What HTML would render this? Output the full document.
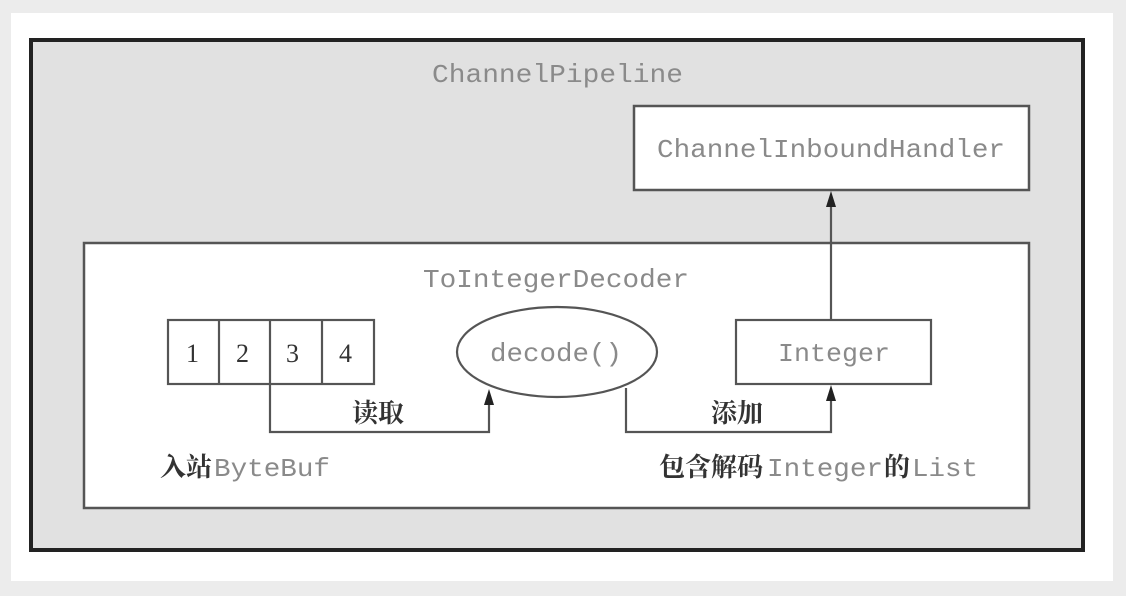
<!DOCTYPE html>
<html><head><meta charset="utf-8"><style>
html,body{margin:0;padding:0;background:#ececec;width:1126px;height:596px;overflow:hidden}
svg{display:block}
.m{font-family:"Liberation Mono",monospace;fill:#8a8a8a;font-size:26px}
.c{font-family:"Liberation Serif","Noto Serif CJK SC",serif;fill:#333;font-size:26px;font-weight:bold}
.n{font-family:"Liberation Serif",serif;fill:#333;font-size:26px}
</style></head><body>
<svg width="1126" height="596" viewBox="0 0 1126 596">
<rect x="11" y="13" width="1102" height="568" fill="#fff"/>
<rect x="31" y="40" width="1052" height="510" fill="#e1e1e1" stroke="#222" stroke-width="4"/>
<text class="m" x="432" y="82" textLength="251" lengthAdjust="spacingAndGlyphs">ChannelPipeline</text>
<rect x="634" y="106" width="395" height="84" fill="#fff" stroke="#555" stroke-width="2.5"/>
<text class="m" x="657" y="157" textLength="348" lengthAdjust="spacingAndGlyphs">ChannelInboundHandler</text>
<rect x="84" y="243" width="945" height="265" fill="#fff" stroke="#555" stroke-width="2.5"/>
<text class="m" x="423" y="287" textLength="266" lengthAdjust="spacingAndGlyphs">ToIntegerDecoder</text>
<g fill="none" stroke="#555" stroke-width="2.2">
<rect x="168" y="320" width="206" height="64"/>
<line x1="219" y1="320" x2="219" y2="384"/>
<line x1="270" y1="320" x2="270" y2="384"/>
<line x1="322" y1="320" x2="322" y2="384"/>
<ellipse cx="557" cy="352" rx="100" ry="45"/>
<rect x="736" y="320" width="195" height="64"/>
<polyline points="270,384 270,432 489,432 489,398"/>
<polyline points="626,388 626,432 831,432 831,392"/>
<line x1="831" y1="320" x2="831" y2="198"/>
</g>
<g fill="#222">
<polygon points="489,389 484,405 494,405"/>
<polygon points="831,385 826,401 836,401"/>
<polygon points="831,191 826,207 836,207"/>
</g>
<text class="n" x="186" y="362">1</text><text class="n" x="236" y="362">2</text><text class="n" x="286" y="362">3</text><text class="n" x="339" y="362">4</text>
<text class="m" x="490" y="361" textLength="132" lengthAdjust="spacingAndGlyphs">decode()</text>
<text class="m" x="778" y="361" textLength="112" lengthAdjust="spacingAndGlyphs">Integer</text>
<text class="c" x="352" y="422">读取</text>
<text class="c" x="711" y="422">添加</text>
<text class="c" x="160" y="476">入站</text>
<text class="m" x="214" y="476" textLength="116" lengthAdjust="spacingAndGlyphs">ByteBuf</text>
<text class="c" x="659" y="476">包含解码</text>
<text class="m" x="767" y="476" textLength="116" lengthAdjust="spacingAndGlyphs">Integer</text>
<text class="c" x="884" y="476">的</text>
<text class="m" x="912" y="476" textLength="66" lengthAdjust="spacingAndGlyphs">List</text>
</svg>
</body></html>
